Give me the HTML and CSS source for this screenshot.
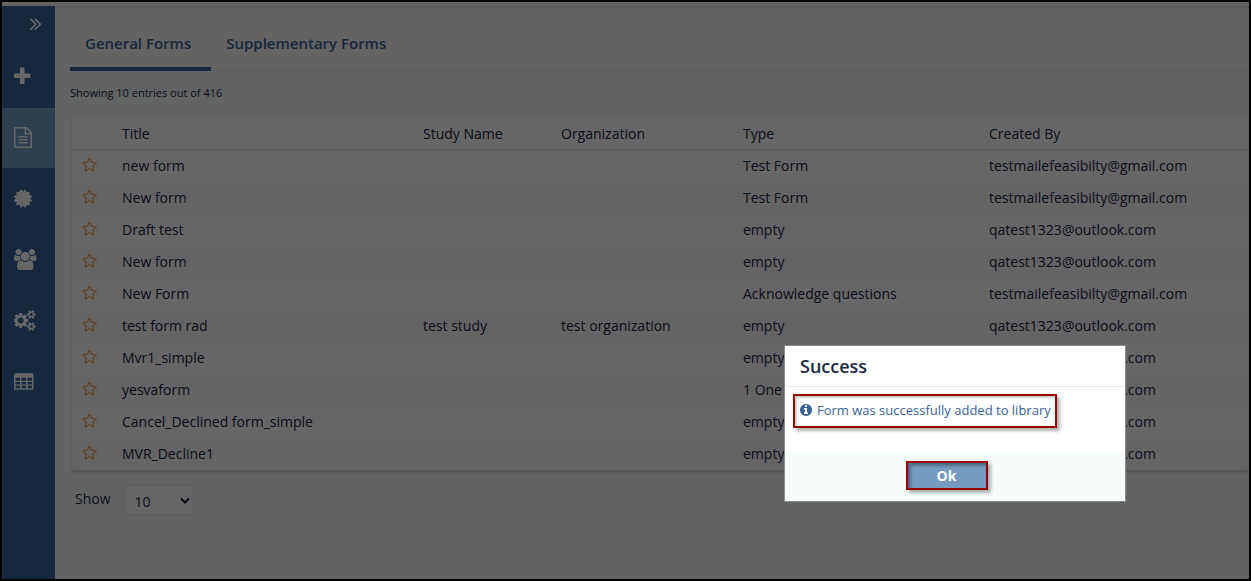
FILE: index.html
```html
<!DOCTYPE html>
<html lang="en">
<head>
    <meta charset="UTF-8">
    <meta name="viewport" content="width=device-width, initial-scale=1.0">
    <title>Form Library</title>

    <!--CSS Styling-->
    <link rel="stylesheet" href="styles.css">
</head>
<body>
    <!-- Shared star icon -->
    <svg class="icon-defs" aria-hidden="true">
        <symbol id="star" viewBox="64 128 1664 1536"><path d="M1201 1004l306-297-422-62-189-382-189 382-422 62 306 297-73 421 378-199 377 199zm527-357q0 22-26 48l-363 354 86 500q1 7 1 20 0 50-41 50-19 0-40-12l-449-236-449 236q-22 12-40 12-21 0-31.500-14.500t-10.500-35.500q0-6 2-20l86-500-364-354q-25-27-25-48 0-37 56-46l502-73 225-455q19-41 49-41t49 41l225 455 502 73q56 9 56 46z"/></symbol>
    </svg>

    <div class="page">
        <!-- Sidebar -->
        <nav class="sidebar">
            <button class="sidebar-toggle" aria-label="Expand menu">
                <svg viewBox="397 0 966 1792"><path d="M979 960q0 13-10 23l-466 466q-10 10-23 10t-23-10l-50-50q-10-10-10-23t10-23l393-393-393-393q-10-10-10-23t10-23l50-50q10-10 23-10t23 10l466 466q10 10 10 23zm384 0q0 13-10 23l-466 466q-10 10-23 10t-23-10l-50-50q-10-10-10-23t10-23l393-393-393-393q-10-10-10-23t10-23l50-50q10-10 23-10t23 10l466 466q10 10 10 23z"/></svg>
            </button>
            <a class="side-link" href="#" aria-label="Add">
                <svg viewBox="192 0 1408 1792"><path d="M1600 736v192q0 40-28 68t-68 28h-416v416q0 40-28 68t-68 28h-192q-40 0-68-28t-28-68v-416h-416q-40 0-68-28t-28-68v-192q0-40 28-68t68-28h416v-416q0-40 28-68t68-28h192q40 0 68 28t28 68v416h416q40 0 68 28t28 68z"/></svg>
            </a>
            <a class="side-link active" href="#" aria-label="Forms">
                <svg viewBox="128 0 1536 1792"><path d="M1596 380q28 28 48 76t20 88v1152q0 40-28 68t-68 28h-1344q-40 0-68-28t-28-68v-1600q0-40 28-68t68-28h896q40 0 88 20t76 48zm-444-244v376h376q-10-29-22-41l-313-313q-12-12-41-22zm384 1528v-1024h-416q-40 0-68-28t-28-68v-416h-768v1536h1280zm-1024-864q0-14 9-23t23-9h704q14 0 23 9t9 23v64q0 14-9 23t-23 9h-704q-14 0-23-9t-9-23v-64zm736 224q14 0 23 9t9 23v64q0 14-9 23t-23 9h-704q-14 0-23-9t-9-23v-64q0-14 9-23t23-9h704zm0 256q14 0 23 9t9 23v64q0 14-9 23t-23 9h-704q-14 0-23-9t-9-23v-64q0-14 9-23t23-9h704z"/></svg>
            </a>
            <a class="side-link" href="#" aria-label="Certificates">
                <svg viewBox="128 0 1536 1792"><path d="M1504 896l138 135q30 28 20 70-12 41-52 51l-188 48 53 186q12 41-19 70-29 31-70 19l-186-53-48 188q-10 40-51 52-12 2-19 2-31 0-51-22l-135-138-135 138q-28 30-70 20-41-11-51-52l-48-188-186 53q-41 12-70-19-31-29-19-70l53-186-188-48q-40-10-52-51-10-42 20-70l138-135-138-135q-30-28-20-70 12-41 52-51l188-48-53-186q-12-41 19-70 29-31 70-19l186 53 48-188q10-41 51-51 41-12 70 19l135 139 135-139q29-30 70-19 41 10 51 51l48 188 186-53q41-12 70 19 31 29 19 70l-53 186 188 48q40 10 52 51 10 42-20 70z"/></svg>
            </a>
            <a class="side-link" href="#" aria-label="Users">
                <svg viewBox="-64 0 1920 1792"><path d="M529 896q-162 5-265 128h-134q-82 0-138-40.500t-56-118.500q0-353 124-353 6 0 43.500 21t97.500 42.500 119 21.500q67 0 133-23-5 37-5 66 0 139 81 256zm1071 637q0 120-73 189.500t-194 69.500h-874q-121 0-194-69.500t-73-189.500q0-53 3.500-103.500t14-109 26.500-108.500 43-97.500 62-81 85.500-53.500 111.500-20q10 0 43 21.500t73 48 107 48 135 21.500 135-21.500 107-48 73-48 43-21.500q61 0 111.500 20t85.500 53.500 62 81 43 97.500 26.500 108.500 14 109 3.500 103.500zm-1024-1277q0 106-75 181t-181 75-181-75-75-181 75-181 181-75 181 75 75 181zm704 384q0 159-112.500 271.500t-271.500 112.500-271.500-112.500-112.500-271.500 112.500-271.500 271.500-112.500 271.500 112.500 112.500 271.500zm576 225q0 78-56 118.500t-138 40.500h-134q-103-123-265-128 81-117 81-256 0-29-5-66 66 23 133 23 59 0 119-21.500t97.500-42.500 43.500-21q124 0 124 353zm-128-609q0 106-75 181t-181 75-181-75-75-181 75-181 181-75 181 75 75 181z"/></svg>
            </a>
            <a class="side-link" href="#" aria-label="Settings">
                <svg viewBox="0 0 1920 1792"><path d="M832 896q0-106-75-181t-181-75-181 75-75 181 75 181 181 75 181-75 75-181zm768 512q0-52-38-90t-90-38-90 38-38 90q0 53 37.500 90.500t90.500 37.500 90.500-37.500 37.500-90.500zm0-1024q0-52-38-90t-90-38-90 38-38 90q0 53 37.500 90.500t90.500 37.500 90.500-37.500 37.500-90.500zm-384 421v185q0 10-7 19.500t-16 10.500l-155 24q-11 35-32 76 34 48 90 115 7 11 7 20 0 12-7 19-23 30-82.500 89.500t-78.500 59.500q-11 0-21-7l-115-90q-37 19-77 31-11 108-23 155-7 24-30 24h-186q-11 0-20-7.500t-10-17.500l-23-153q-34-10-75-31l-118 89q-7 7-20 7-11 0-21-8-144-133-144-160 0-9 7-19 10-14 41-53t47-61q-23-44-35-82l-152-24q-10-1-17-9.500t-7-19.500v-185q0-10 7-19.500t16-10.500l155-24q11-35 32-76-34-48-90-115-7-11-7-20 0-12 7-20 22-30 82-89t79-59q11 0 21 7l115 90q34-18 77-32 11-108 23-154 7-24 30-24h186q11 0 20 7.500t10 17.500l23 153q34 10 75 31l118-89q8-7 20-7 11 0 21 8 144 133 144 160 0 8-7 19-12 16-42 54t-45 60q23 48 34 82l152 23q10 2 17 10.500t7 19.500zm640 533v140q0 16-149 31-12 27-30 52 51 113 51 138 0 4-4 7-122 71-124 71-8 0-46-47t-52-68q-20 2-30 2t-30-2q-14 21-52 68t-46 47q-2 0-124-71-4-3-4-7 0-25 51-138-18-25-30-52-149-15-149-31v-140q0-16 149-31 13-29 30-52-51-113-51-138 0-4 4-7 4-2 35-20t59-34 30-16q8 0 46 46.500t52 67.500q20-2 30-2t30 2q51-71 92-112l6-2q4 0 124 70 4 3 4 7 0 25-51 138 17 23 30 52 149 15 149 31zm0-1024v140q0 16-149 31-12 27-30 52 51 113 51 138 0 4-4 7-122 71-124 71-8 0-46-47t-52-68q-20 2-30 2t-30-2q-14 21-52 68t-46 47q-2 0-124-71-4-3-4-7 0-25 51-138-18-25-30-52-149-15-149-31v-140q0-16 149-31 13-29 30-52-51-113-51-138 0-4 4-7 4-2 35-20t59-34 30-16q8 0 46 46.500t52 67.500q20-2 30-2t30 2q51-71 92-112l6-2q4 0 124 70 4 3 4 7 0 25-51 138 17 23 30 52 149 15 149 31z"/></svg>
            </a>
            <a class="side-link" href="#" aria-label="Tables">
                <svg viewBox="0 0 1664 1792"><path fill-rule="evenodd" d="M160 192h1344q160 0 160 160v1088q0 160-160 160h-1344q-160 0-160-160v-1088q0-160 160-160zM128 576v256h384v-256zM640 576v256h384v-256zM1152 576v256h384v-256zM128 928v224h384v-224zM640 928v224h384v-224zM1152 928v224h384v-224zM128 1248v224h384v-224zM640 1248v224h384v-224zM1152 1248v224h384v-224z"/></svg>
            </a>
        </nav>

        <!-- Form Library -->
        <main class="content">
            <div class="tabs">
                <a class="tab selected" href="#">General Forms</a>
                <a class="tab" href="#">Supplementary Forms</a>
            </div>
            <p class="entries">Showing 10 entries out of 416</p>

            <div class="card">
                <table class="forms">
                    <colgroup>
                        <col class="col-star">
                        <col class="col-title">
                        <col class="col-study">
                        <col class="col-org">
                        <col class="col-type">
                        <col>
                    </colgroup>
                    <thead>
                        <tr><th></th><th>Title</th><th>Study Name</th><th>Organization</th><th>Type</th><th>Created By</th></tr>
                    </thead>
                    <tbody>
                        <tr><td><svg class="star"><use href="#star"/></svg></td><td>new form</td><td></td><td></td><td>Test Form</td><td>testmailefeasibilty@gmail.com</td></tr>
                        <tr><td><svg class="star"><use href="#star"/></svg></td><td>New form</td><td></td><td></td><td>Test Form</td><td>testmailefeasibilty@gmail.com</td></tr>
                        <tr><td><svg class="star"><use href="#star"/></svg></td><td>Draft test</td><td></td><td></td><td>empty</td><td>qatest1323@outlook.com</td></tr>
                        <tr><td><svg class="star"><use href="#star"/></svg></td><td>New form</td><td></td><td></td><td>empty</td><td>qatest1323@outlook.com</td></tr>
                        <tr><td><svg class="star"><use href="#star"/></svg></td><td>New Form</td><td></td><td></td><td>Acknowledge questions</td><td>testmailefeasibilty@gmail.com</td></tr>
                        <tr><td><svg class="star"><use href="#star"/></svg></td><td>test form rad</td><td>test study</td><td>test organization</td><td>empty</td><td>qatest1323@outlook.com</td></tr>
                        <tr><td><svg class="star"><use href="#star"/></svg></td><td>Mvr1_simple</td><td></td><td></td><td>empty</td><td>qatest1323@outlook.com</td></tr>
                        <tr><td><svg class="star"><use href="#star"/></svg></td><td>yesvaform</td><td></td><td></td><td>1 One</td><td>qatest1323@outlook.com</td></tr>
                        <tr><td><svg class="star"><use href="#star"/></svg></td><td>Cancel_Declined form_simple</td><td></td><td></td><td>empty</td><td>qatest1323@outlook.com</td></tr>
                        <tr><td><svg class="star"><use href="#star"/></svg></td><td>MVR_Decline1</td><td></td><td></td><td>empty</td><td>qatest1323@outlook.com</td></tr>
                    </tbody>
                </table>
            </div>

            <div class="pager">
                <label for="pageSize">Show</label>
                <span class="select-wrap">
                    <select id="pageSize">
                        <option>10</option>
                        <option>25</option>
                        <option>50</option>
                    </select>
                    <svg class="caret" viewBox="0 0 10 7"><path d="M1 1.500l4 4 4-4"/></svg>
                </span>
            </div>
        </main>
    </div>

    <!-- Success Modal -->
    <div class="overlay">
        <div class="modal" role="dialog" aria-labelledby="modalTitle">
            <h2 class="modal-title" id="modalTitle">Success</h2>
            <div class="modal-body">
                <p class="message">
                    <svg viewBox="128 128 1536 1536"><path d="M1152 1376v-160q0-14-9-23t-23-9h-96v-512q0-14-9-23t-23-9h-320q-14 0-23 9t-9 23v160q0 14 9 23t23 9h96v320h-96q-14 0-23 9t-9 23v160q0 14 9 23t23 9h448q14 0 23-9t9-23zm-128-896v-160q0-14-9-23t-23-9h-192q-14 0-23 9t-9 23v160q0 14 9 23t23 9h192q14 0 23-9t9-23zm640 416q0 209-103 385.500t-279.500 279.500-385.500 103-385.500-103-279.500-279.500-103-385.500 103-385.500 279.500-279.500 385.500-103 385.500 103 279.500 279.500 103 385.500z"/></svg>
                    <span>Form was successfully added to library</span>
                </p>
            </div>
            <div class="modal-footer">
                <button class="ok-btn">Ok</button>
            </div>
        </div>
    </div>
</body>
</html>
```
FILE: styles.css
```css
/* Global Styles */
* {
    box-sizing: border-box;
}

body {
    margin: 0;
    height: 100vh;
    overflow: hidden;
    border: 2px solid #000;
    font-family: "Open Sans", "Noto Sans", sans-serif;
    font-size: 14px;
    line-height: 20px;
    color: #1b2747;
    background-color: #f6fbfa;
}

.icon-defs {
    display: none;
}

.page {
    display: flex;
    height: 100%;
    border-top: 4px solid #fbfbf8;
}

/* Sidebar */
.sidebar {
    flex: none;
    display: flex;
    flex-direction: column;
    gap: 1px;
    width: 53px;
    background-color: #3a6296;
}

.sidebar svg {
    display: block;
    height: 21px;
    fill: #fff;
}

.sidebar-toggle {
    display: flex;
    align-items: center;
    justify-content: flex-end;
    height: 40px;
    padding: 0 14px 6px 0;
    border: none;
    background: none;
    cursor: pointer;
}

.side-link {
    display: flex;
    align-items: center;
    height: 60px;
    padding: 0 0 2px 12px;
}

.side-link.active {
    background-color: #789fc2;
}

/* Content Container */
.content {
    flex: 1;
    min-width: 0;
    padding: 16px 0 0 15px;
    box-shadow: inset 0 3px 3px -2px rgba(0, 0, 0, 0.2);
}

/* Tabs */
.tabs {
    display: flex;
    height: 49px;
    border-bottom: 1px solid #e0e6f0;
    background-color: #faf8f5;
}

.tab {
    height: 49px;
    padding: 11px 20px 0 15px;
    font-size: 15px;
    font-weight: 600;
    color: #3a6296;
    text-decoration: none;
}

.tab.selected {
    border-bottom: 4px solid #3a6296;
}

.entries {
    margin: 12px 0 15px;
    font-size: 11px;
}

/* Forms Table */
.card {
    margin-left: 2px;
    background-color: #fff;
    box-shadow: 0 2px 3px rgba(0, 0, 0, 0.18);
}

.forms {
    width: 100%;
    table-layout: fixed;
    border-spacing: 0;
}

.col-star { width: 40px; }
.col-title { width: 301px; }
.col-study { width: 138px; }
.col-org { width: 182px; }
.col-type { width: 246px; }

.forms th,
.forms td {
    height: 32px;
    padding: 0 10px;
    font-weight: normal;
    text-align: left;
    white-space: nowrap;
}

.forms th {
    border-bottom: 1px solid #e3e6ea;
}

.forms tbody tr:nth-child(even) {
    background-color: #fafafa;
}

.star {
    display: block;
    width: 15px;
    height: 14px;
    margin-bottom: 2px;
    fill: #f0a050;
}

/* Page Size */
.pager {
    display: flex;
    gap: 13px;
    padding: 15px 0 0 5px;
}

.pager label {
    padding-top: 4px;
}

.select-wrap {
    position: relative;
}

.select-wrap select {
    width: 70px;
    height: 30px;
    padding: 4px 10px 0;
    appearance: none;
    border: 1px solid #dbe4f0;
    border-radius: 4px;
    background-color: #fff;
    font: inherit;
    color: inherit;
}

.caret {
    position: absolute;
    top: 12px;
    right: 4px;
    width: 10px;
    height: 7px;
    fill: none;
    stroke: #1b2747;
    stroke-width: 2;
    pointer-events: none;
}

/* The Modal (background) */
.overlay {
    position: fixed;
    inset: 0;
    background-color: rgba(0, 0, 0, 0.6);
}

/* Modal Content */
.modal {
    position: absolute;
    top: 345px;
    right: 125px;
    width: 342px;
    border: 1px solid #8a8a8a;
    background-color: #fff;
}

.modal-title {
    margin: 0;
    padding: 10px 15px;
    border-bottom: 1px solid #e2eaee;
    border-radius: 4px;
    font-size: 18px;
    line-height: 20px;
    font-weight: 600;
}

.modal-body {
    padding: 7px 8px 24px;
}

.message {
    display: flex;
    align-items: center;
    gap: 5px;
    width: fit-content;
    height: 34px;
    margin: 0;
    padding: 0 4px 2px 5px;
    border: 2px solid #960000;
    box-shadow: 3px 3px 3px rgba(0, 0, 0, 0.3), inset 2px 2px 2px rgba(0, 0, 0, 0.2);
    font-size: 13px;
    color: #3a6296;
}

.message svg {
    width: 12px;
    height: 12px;
    fill: #3a6296;
}

.modal-footer {
    display: flex;
    justify-content: center;
    padding: 9px 17px 11px 0;
    background-color: #f5fcfb;
}

.ok-btn {
    width: 82px;
    height: 29px;
    border: 2px solid #960000;
    background-color: #759cc0;
    box-shadow: 3px 3px 3px rgba(0, 0, 0, 0.3), inset 3px 3px 3px rgba(0, 0, 0, 0.3);
    font-family: inherit;
    font-size: 14px;
    font-weight: 700;
    color: #fff;
    cursor: pointer;
}
```
